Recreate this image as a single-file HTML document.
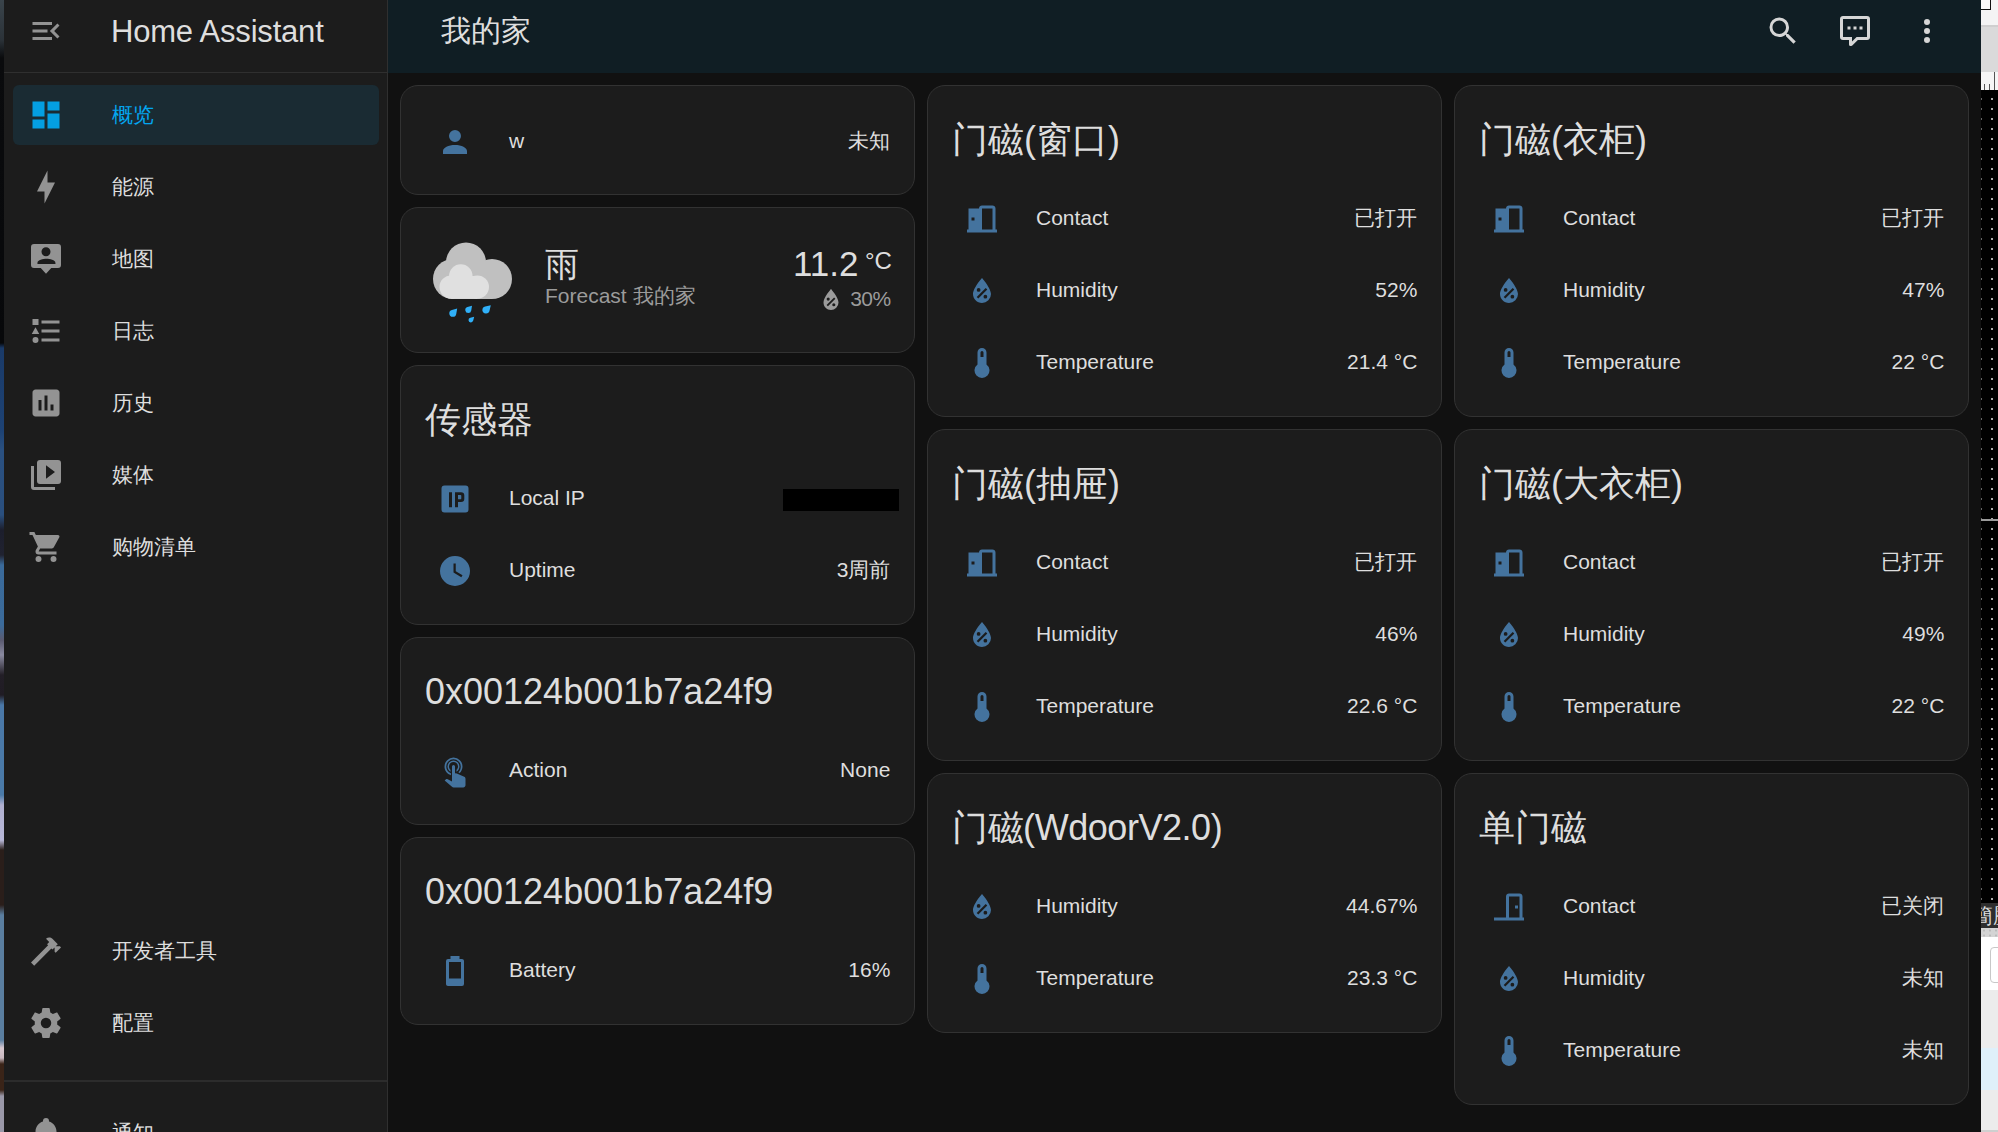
<!DOCTYPE html><html><head><meta charset="utf-8"><style>
html,body{margin:0;padding:0;}
body{width:1998px;height:1132px;overflow:hidden;position:relative;background:#111111;font-family:"Liberation Sans",sans-serif;}
.t{position:absolute;white-space:nowrap;}
.card{position:absolute;box-sizing:border-box;background:#1c1c1c;border:1px solid #323232;border-radius:18px;}
.r{position:absolute;}
</style></head><body>
<div class="r" style="left:0;top:0;width:4px;height:1132px;background:linear-gradient(to bottom,#3a444b 0px,#2b3238 40px,#0a0b0d 58px,#07080a 343px,#1a3a68 348px,#1d4274 430px,#2a5080 450px,#2a4f7e 515px,#1c1e2c 530px,#202230 555px,#3a6a9a 565px,#3b6b9b 625px,#5a5a70 640px,#8a8aa0 655px,#221e26 675px,#201c24 695px,#4a78a8 705px,#4a7aa8 795px,#b0b0d0 805px,#b8b8d8 840px,#2a1e1a 850px,#2a1e1a 905px,#5a7ea0 915px,#5a7ea0 1040px,#d8c8d0 1048px,#c8b8c0 1058px,#3a2418 1064px,#3a2418 1090px,#9a98a8 1096px,#9a98a8 1132px)"></div>
<div class="r" style="left:4px;top:0;width:383px;height:1132px;background:#1c1c1c;border-right:1px solid #2f2f2f"></div>
<div class="r" style="left:4px;top:72px;width:383px;height:1px;background:#2f2f2f"></div>
<div class="r" style="left:4px;top:1080px;width:383px;height:2px;background:#2c2c2c"></div>
<svg style="position:absolute;left:27.5px;top:12.6px;width:36px;height:36px" viewBox="0 0 24 24"><path fill="#939393" fill-rule="evenodd" d="M21,15.61L19.59,17L14.58,12L19.59,7L21,8.39L17.44,12L21,15.61M3,6H16V8H3V6M3,13V11H13V13H3M3,18V16H16V18H3Z"/></svg>
<div class="t " style="left:111px;top:12.70px;font-size:31px;line-height:37.20px;color:#dedede;letter-spacing:-0.2px">Home Assistant</div>
<div class="r" style="left:13px;top:85px;width:366px;height:60px;background:#1a2b33;border-radius:6px"></div>
<svg style="position:absolute;left:27.5px;top:97px;width:36px;height:36px" viewBox="0 0 24 24"><path fill="#049fe2" fill-rule="evenodd" d="M13,3V9H21V3M13,21H21V11H13M3,21H11V15H3M3,13H11V3H3V13Z"/></svg>
<div class="t " style="left:111.5px;top:102.40px;font-size:21px;line-height:25.20px;color:#03a6f0;">概览</div>
<svg style="position:absolute;left:27.5px;top:169px;width:36px;height:36px" viewBox="0 0 24 24"><path fill="#939393" fill-rule="evenodd" d="M11 15H6L13 1V9H18L11 23V15Z"/></svg>
<div class="t " style="left:111.5px;top:174.40px;font-size:21px;line-height:25.20px;color:#dedede;">能源</div>
<svg style="position:absolute;left:27.5px;top:241px;width:36px;height:36px" viewBox="0 0 24 24"><path fill="#939393" fill-rule="evenodd" d="M4,2H20A2,2 0 0,1 22,4V16A2,2 0 0,1 20,18H15.5L12,21.8L8.5,18H4A2,2 0 0,1 2,16V4A2,2 0 0,1 4,2M12,4.2A3,3 0 0,0 9,7.2A3,3 0 0,0 12,10.2A3,3 0 0,0 15,7.2A3,3 0 0,0 12,4.2M6.3,15.3H18.3V14.6C18.3,12.8 14.5,11.9 12.3,11.9C10.1,11.9 6.3,12.8 6.3,14.6V15.3Z"/></svg>
<div class="t " style="left:111.5px;top:246.40px;font-size:21px;line-height:25.20px;color:#dedede;">地图</div>
<svg style="position:absolute;left:27.5px;top:313px;width:36px;height:36px" viewBox="0 0 24 24"><path fill="#939393" fill-rule="evenodd" d="M5,9.5L7.5,14H2.5L5,9.5M3,4H7V8H3V4M5,20A2,2 0 0,0 7,18A2,2 0 0,0 5,16A2,2 0 0,0 3,18A2,2 0 0,0 5,20M9,5V7H21V5H9M9,19H21V17H9V19M9,13H21V11H9V13Z"/></svg>
<div class="t " style="left:111.5px;top:318.40px;font-size:21px;line-height:25.20px;color:#dedede;">日志</div>
<svg style="position:absolute;left:27.5px;top:385px;width:36px;height:36px" viewBox="0 0 24 24"><path fill="#939393" fill-rule="evenodd" d="M19 3H5C3.9 3 3 3.9 3 5V19C3 20.1 3.9 21 5 21H19C20.1 21 21 20.1 21 19V5C21 3.9 20.1 3 19 3M9 17H7V10H9V17M13 17H11V7H13V17M17 17H15V13H17V17Z"/></svg>
<div class="t " style="left:111.5px;top:390.40px;font-size:21px;line-height:25.20px;color:#dedede;">历史</div>
<svg style="position:absolute;left:27.5px;top:457px;width:36px;height:36px" viewBox="0 0 24 24"><path fill="#939393" fill-rule="evenodd" d="M4,6H2V20A2,2 0 0,0 4,22H18V20H4V6M20,2H8A2,2 0 0,0 6,4V16A2,2 0 0,0 8,18H20A2,2 0 0,0 22,16V4A2,2 0 0,0 20,2M12,14.5V5.5L18,10L12,14.5Z"/></svg>
<div class="t " style="left:111.5px;top:462.40px;font-size:21px;line-height:25.20px;color:#dedede;">媒体</div>
<svg style="position:absolute;left:27.5px;top:529px;width:36px;height:36px" viewBox="0 0 24 24"><path fill="#939393" fill-rule="evenodd" d="M17,18C15.89,18 15,18.89 15,20A2,2 0 0,0 17,22A2,2 0 0,0 19,20C19,18.89 18.1,18 17,18M1,2V4H3L6.6,11.59L5.24,14.04C5.09,14.32 5,14.65 5,15A2,2 0 0,0 7,17H19V15H7.42A0.25,0.25 0 0,1 7.17,14.75C7.17,14.7 7.18,14.66 7.2,14.63L8.1,13H15.55C16.3,13 16.96,12.58 17.3,11.97L20.88,5.5C20.95,5.34 21,5.17 21,5A1,1 0 0,0 20,4H5.21L4.27,2M7,18C5.89,18 5,18.89 5,20A2,2 0 0,0 7,22A2,2 0 0,0 9,20C9,18.89 8.1,18 7,18Z"/></svg>
<div class="t " style="left:111.5px;top:534.40px;font-size:21px;line-height:25.20px;color:#dedede;">购物清单</div>
<svg style="position:absolute;left:27.5px;top:933px;width:36px;height:36px" viewBox="0 0 24 24"><path fill="#939393" fill-rule="evenodd" d="M2 19.63L13.43 8.2L12.72 7.5L14.14 6.07L12 3.89C13.2 2.7 15.09 2.7 16.27 3.89L19.87 7.5L18.45 8.91H21.29L22 9.62L18.45 13.21L17.74 12.5V9.62L16.27 11.04L15.56 10.33L4.13 21.76L2 19.63Z"/></svg>
<div class="t " style="left:111.5px;top:938.40px;font-size:21px;line-height:25.20px;color:#dedede;">开发者工具</div>
<svg style="position:absolute;left:27.5px;top:1005px;width:36px;height:36px" viewBox="0 0 24 24"><path fill="#939393" fill-rule="evenodd" d="M12,15.5A3.5,3.5 0 0,1 8.5,12A3.5,3.5 0 0,1 12,8.5A3.5,3.5 0 0,1 15.5,12A3.5,3.5 0 0,1 12,15.5M19.43,12.97C19.47,12.65 19.5,12.33 19.5,12C19.5,11.67 19.47,11.34 19.43,11L21.54,9.37C21.73,9.22 21.78,8.95 21.66,8.73L19.66,5.27C19.54,5.05 19.27,4.96 19.05,5.05L16.56,6.05C16.04,5.66 15.5,5.32 14.87,5.07L14.5,2.42C14.46,2.18 14.25,2 14,2H10C9.75,2 9.54,2.18 9.5,2.42L9.13,5.07C8.5,5.32 7.96,5.66 7.44,6.05L4.95,5.05C4.73,4.96 4.46,5.05 4.34,5.27L2.34,8.73C2.21,8.95 2.27,9.22 2.46,9.37L4.57,11C4.53,11.34 4.5,11.67 4.5,12C4.5,12.33 4.53,12.65 4.57,12.97L2.46,14.63C2.27,14.78 2.21,15.05 2.34,15.27L4.34,18.73C4.46,18.95 4.73,19.03 4.95,18.95L7.44,17.94C7.96,18.34 8.5,18.68 9.13,18.93L9.5,21.58C9.54,21.82 9.75,22 10,22H14C14.25,22 14.46,21.82 14.5,21.58L14.87,18.93C15.5,18.67 16.04,18.34 16.56,17.94L19.05,18.95C19.27,19.03 19.54,18.95 19.66,18.73L21.66,15.27C21.78,15.05 21.73,14.78 21.54,14.63L19.43,12.97Z"/></svg>
<div class="t " style="left:111.5px;top:1010.40px;font-size:21px;line-height:25.20px;color:#dedede;">配置</div>
<svg style="position:absolute;left:27.5px;top:1115px;width:36px;height:36px" viewBox="0 0 24 24"><path fill="#939393" fill-rule="evenodd" d="M21,19V20H3V19L5,17V11C5,7.9 7.03,5.17 10,4.29C10,4.19 10,4.1 10,4A2,2 0 0,1 12,2A2,2 0 0,1 14,4C14,4.1 14,4.19 14,4.29C16.97,5.17 19,7.9 19,11V17L21,19M14,21A2,2 0 0,1 12,23A2,2 0 0,1 10,21"/></svg>
<div class="t " style="left:111.5px;top:1120.40px;font-size:21px;line-height:25.20px;color:#dedede;">通知</div>
<div class="r" style="left:388px;top:0;width:1593px;height:73px;background:#101e24"></div>
<div class="t " style="left:441px;top:13.00px;font-size:30px;line-height:36.00px;color:#dedede;">我的家</div>
<svg style="position:absolute;left:1765px;top:12.7px;width:36px;height:36px" viewBox="0 0 24 24"><path fill="#d6d6d6" fill-rule="evenodd" d="M9.5,3A6.5,6.5 0 0,1 16,9.5C16,11.11 15.41,12.59 14.44,13.73L14.71,14H15.5L20.5,19L19,20.5L14,15.5V14.71L13.73,14.44C12.59,15.41 11.11,16 9.5,16A6.5,6.5 0 0,1 3,9.5A6.5,6.5 0 0,1 9.5,3M9.5,5C7,5 5,7 5,9.5C5,12 7,14 9.5,14C12,14 14,12 14,9.5C14,7 12,5 9.5,5Z"/></svg>
<svg style="position:absolute;left:1837.3px;top:12.7px;width:36px;height:36px" viewBox="0 0 24 24"><path fill="#d6d6d6" fill-rule="evenodd" d="M9,22A1,1 0 0,1 8,21V18H4A2,2 0 0,1 2,16V4C2,2.89 2.9,2 4,2H20A2,2 0 0,1 22,4V16A2,2 0 0,1 20,18H13.9L10.2,21.71C10,21.9 9.75,22 9.5,22V22H9M10,16V19.08L13.08,16H20V4H4V16H10M17,11H15V9H17V11M13,11H11V9H13V11M9,11H7V9H9V11Z"/></svg>
<svg style="position:absolute;left:1909px;top:13px;width:36px;height:36px" viewBox="0 0 24 24"><path fill="#d6d6d6" fill-rule="evenodd" d="M12,16A2,2 0 0,1 14,18A2,2 0 0,1 12,20A2,2 0 0,1 10,18A2,2 0 0,1 12,16M12,10A2,2 0 0,1 14,12A2,2 0 0,1 12,14A2,2 0 0,1 10,12A2,2 0 0,1 12,10M12,4A2,2 0 0,1 14,6A2,2 0 0,1 12,8A2,2 0 0,1 10,6A2,2 0 0,1 12,4Z"/></svg>
<div class="card" style="left:400px;top:85px;width:515px;height:110px"></div>
<svg style="position:absolute;left:437px;top:123.7px;width:36px;height:36px" viewBox="0 0 24 24"><path fill="#44739e" fill-rule="evenodd" d="M12,4A4,4 0 0,1 16,8A4,4 0 0,1 12,12A4,4 0 0,1 8,8A4,4 0 0,1 12,4M12,14C16.42,14 20,15.79 20,18V20H4V18C4,15.79 7.58,14 12,14Z"/></svg>
<div class="t " style="left:509px;top:128.40px;font-size:21px;line-height:25.20px;color:#dedede;">w</div>
<div class="t " style="right:1107.7px;top:128.40px;font-size:21px;line-height:25.20px;color:#dedede;text-align:right;">未知</div>
<div class="card" style="left:400px;top:207px;width:515px;height:146px"></div>
<div class="card" style="left:400px;top:365px;width:515px;height:260px"></div>
<div class="t " style="left:425px;top:398.40px;font-size:36px;line-height:43.20px;color:#dedede;">传感器</div>
<svg style="position:absolute;left:437px;top:480.7px;width:36px;height:36px" viewBox="0 0 24 24"><path fill="#44739e" fill-rule="evenodd" d="M5,3H19A2,2 0 0,1 21,5V19A2,2 0 0,1 19,21H5A2,2 0 0,1 3,19V5A2,2 0 0,1 5,3M8,7.5V17.5H10V7.5H8M12,7.5V17.5H14V14H16A2.2,2.2 0 0,0 18.2,11.8V9.7A2.2,2.2 0 0,0 16,7.5H12M14,9.3H15.6A0.6,0.6 0 0,1 16.2,9.9V11.6A0.6,0.6 0 0,1 15.6,12.2H14V9.3Z"/></svg>
<div class="t " style="left:509px;top:485.40px;font-size:21px;line-height:25.20px;color:#dedede;">Local IP</div>
<div class="t " style="right:1107.7px;top:485.40px;font-size:21px;line-height:25.20px;color:#dedede;text-align:right;"></div>
<div class="r" style="left:783px;top:489px;width:116px;height:22px;background:#000"></div>
<svg style="position:absolute;left:437px;top:552.7px;width:36px;height:36px" viewBox="0 0 24 24"><path fill="#44739e" fill-rule="evenodd" d="M12,2A10,10 0 0,0 2,12A10,10 0 0,0 12,22A10,10 0 0,0 22,12A10,10 0 0,0 12,2M16.2,16.2L11,13V7H12.5V12.2L17,14.9L16.2,16.2Z"/></svg>
<div class="t " style="left:509px;top:557.40px;font-size:21px;line-height:25.20px;color:#dedede;">Uptime</div>
<div class="t " style="right:1107.7px;top:557.40px;font-size:21px;line-height:25.20px;color:#dedede;text-align:right;">3周前</div>
<div class="card" style="left:400px;top:637px;width:515px;height:188px"></div>
<div class="t " style="left:425px;top:670.40px;font-size:36px;line-height:43.20px;color:#dedede;">0x00124b001b7a24f9</div>
<svg style="position:absolute;left:437px;top:752.7px;width:36px;height:36px" viewBox="0 0 24 24"><path fill="#44739e" fill-rule="evenodd" d="M10,9A1,1 0 0,1 11,8A1,1 0 0,1 12,9V13.47L13.21,13.6L18.15,15.79C18.68,16.03 19,16.56 19,17.14V21.5C18.97,22.32 18.32,22.97 17.5,23H11C10.62,23 10.26,22.85 10,22.57L5.1,18.37L5.84,17.6C6.03,17.39 6.3,17.28 6.59,17.28H6.8L10,19V9M11,5A4,4 0 0,1 15,9C15,10.5 14.2,11.77 13,12.46V11.24C13.61,10.69 14,9.89 14,9A3,3 0 0,0 11,6A3,3 0 0,0 8,9C8,9.89 8.39,10.69 9,11.24V12.46C7.8,11.77 7,10.5 7,9A4,4 0 0,1 11,5M11,3A6,6 0 0,1 17,9C17,10.7 16.29,12.23 15.17,13.33L14.22,12.88C15.19,12 15.83,10.76 15.83,9A4.83,4.83 0 0,0 11,4.17A4.83,4.83 0 0,0 6.17,9C6.17,11.05 7.45,12.81 9.25,13.5V14.75C6.82,14 5,11.72 5,9A6,6 0 0,1 11,3Z"/></svg>
<div class="t " style="left:509px;top:757.40px;font-size:21px;line-height:25.20px;color:#dedede;">Action</div>
<div class="t " style="right:1107.7px;top:757.40px;font-size:21px;line-height:25.20px;color:#dedede;text-align:right;">None</div>
<div class="card" style="left:400px;top:837px;width:515px;height:188px"></div>
<div class="t " style="left:425px;top:870.40px;font-size:36px;line-height:43.20px;color:#dedede;">0x00124b001b7a24f9</div>
<svg style="position:absolute;left:437px;top:952.7px;width:36px;height:36px" viewBox="0 0 24 24"><path fill="#44739e" fill-rule="evenodd" d="M16,17H8V6H16M16.67,4H15V2H9V4H7.33A1.33,1.33 0 0,0 6,5.33V20.67C6,21.4 6.6,22 7.33,22H16.67A1.33,1.33 0 0,0 18,20.67V5.33C18,4.6 17.4,4 16.67,4Z"/></svg>
<div class="t " style="left:509px;top:957.40px;font-size:21px;line-height:25.20px;color:#dedede;">Battery</div>
<div class="t " style="right:1107.7px;top:957.40px;font-size:21px;line-height:25.20px;color:#dedede;text-align:right;">16%</div>
<svg style="position:absolute;left:420px;top:230px;width:110px;height:100px" viewBox="420 230 110 100">
<g fill="#c0c0c0"><circle cx="466" cy="262.5" r="20"/><circle cx="453" cy="279" r="20"/><circle cx="492" cy="279" r="20"/><rect x="453" y="262" width="39" height="37"/></g>
<g fill="#e0e0e0"><circle cx="460.8" cy="276" r="11.7"/><circle cx="451.2" cy="287.1" r="11.7"/><circle cx="477.3" cy="287.1" r="11.7"/><rect x="451.2" y="276" width="26" height="22.8"/></g>
<g fill="#30b0f8"><path d="M457.20,308.60L456.24,313.92A3.5,3.5 0 1 1 451.96,309.90Z"/><path d="M472.00,305.80L471.26,310.47A3.0,3.0 0 1 1 467.46,307.12Z"/><path d="M490.80,305.20L489.51,310.81A3.6,3.6 0 1 1 485.19,306.49Z"/><path d="M474.20,316.80L473.22,320.60A2.4,2.4 0 1 1 470.37,317.66Z"/></g></svg>
<div class="t " style="left:545px;top:243.60px;font-size:34px;line-height:40.80px;color:#dedede;">雨</div>
<div class="t " style="left:545px;top:283.40px;font-size:21px;line-height:25.20px;color:#9b9b9b;">Forecast 我的家</div>
<div class="t " style="right:1139.5px;top:243.30px;font-size:35px;line-height:42.00px;color:#dedede;text-align:right;">11.2</div>
<div class="t " style="left:865px;top:246.60px;font-size:24px;line-height:28.80px;color:#dedede;">°C</div>
<svg style="position:absolute;left:816px;top:285px;width:30px;height:30px" viewBox="0 0 24 24"><path fill="#9b9b9b" fill-rule="evenodd" d="M12,3.25C12,3.25 6,10 6,14C6,17.32 8.69,20 12,20A6,6 0 0,0 18,14C18,10 12,3.25 12,3.25M14.47,9.97L15.53,11.03L9.53,17.03L8.47,15.97M9.75,10A1.25,1.25 0 0,1 11,11.25A1.25,1.25 0 0,1 9.75,12.5A1.25,1.25 0 0,1 8.5,11.25A1.25,1.25 0 0,1 9.75,10M14.25,14.5A1.25,1.25 0 0,1 15.5,15.75A1.25,1.25 0 0,1 14.25,17A1.25,1.25 0 0,1 13,15.75A1.25,1.25 0 0,1 14.25,14.5Z"/></svg>
<div class="t " style="right:1107.5px;top:286.40px;font-size:21px;line-height:25.20px;color:#9b9b9b;text-align:right;letter-spacing:-0.6px">30%</div>
<div class="card" style="left:927px;top:85px;width:515px;height:332px"></div>
<div class="t " style="left:952px;top:118.40px;font-size:36px;line-height:43.20px;color:#dedede;">门磁(窗口)</div>
<svg style="position:absolute;left:964px;top:200.7px;width:36px;height:36px" viewBox="0 0 24 24"><path fill="#44739e" fill-rule="evenodd" d="M12,3C10.89,3 10,3.89 10,5H3V19H2V21H22V19H21V5C21,3.89 20.11,3 19,3H12M12,5H19V19H12V5M5,11H7V13H5V11Z"/></svg>
<div class="t " style="left:1036px;top:205.40px;font-size:21px;line-height:25.20px;color:#dedede;">Contact</div>
<div class="t " style="right:580.7px;top:205.40px;font-size:21px;line-height:25.20px;color:#dedede;text-align:right;">已打开</div>
<svg style="position:absolute;left:964px;top:272.7px;width:36px;height:36px" viewBox="0 0 24 24"><path fill="#44739e" fill-rule="evenodd" d="M12,3.25C12,3.25 6,10 6,14C6,17.32 8.69,20 12,20A6,6 0 0,0 18,14C18,10 12,3.25 12,3.25M14.47,9.97L15.53,11.03L9.53,17.03L8.47,15.97M9.75,10A1.25,1.25 0 0,1 11,11.25A1.25,1.25 0 0,1 9.75,12.5A1.25,1.25 0 0,1 8.5,11.25A1.25,1.25 0 0,1 9.75,10M14.25,14.5A1.25,1.25 0 0,1 15.5,15.75A1.25,1.25 0 0,1 14.25,17A1.25,1.25 0 0,1 13,15.75A1.25,1.25 0 0,1 14.25,14.5Z"/></svg>
<div class="t " style="left:1036px;top:277.40px;font-size:21px;line-height:25.20px;color:#dedede;">Humidity</div>
<div class="t " style="right:580.7px;top:277.40px;font-size:21px;line-height:25.20px;color:#dedede;text-align:right;">52%</div>
<svg style="position:absolute;left:964px;top:344.7px;width:36px;height:36px" viewBox="0 0 24 24"><path fill="#44739e" fill-rule="evenodd" d="M15 13V5A3 3 0 0 0 9 5V13A5 5 0 1 0 15 13M12 4A1 1 0 0 1 13 5V8H11V5A1 1 0 0 1 12 4Z"/></svg>
<div class="t " style="left:1036px;top:349.40px;font-size:21px;line-height:25.20px;color:#dedede;">Temperature</div>
<div class="t " style="right:580.7px;top:349.40px;font-size:21px;line-height:25.20px;color:#dedede;text-align:right;">21.4 °C</div>
<div class="card" style="left:927px;top:429px;width:515px;height:332px"></div>
<div class="t " style="left:952px;top:462.40px;font-size:36px;line-height:43.20px;color:#dedede;">门磁(抽屉)</div>
<svg style="position:absolute;left:964px;top:544.7px;width:36px;height:36px" viewBox="0 0 24 24"><path fill="#44739e" fill-rule="evenodd" d="M12,3C10.89,3 10,3.89 10,5H3V19H2V21H22V19H21V5C21,3.89 20.11,3 19,3H12M12,5H19V19H12V5M5,11H7V13H5V11Z"/></svg>
<div class="t " style="left:1036px;top:549.40px;font-size:21px;line-height:25.20px;color:#dedede;">Contact</div>
<div class="t " style="right:580.7px;top:549.40px;font-size:21px;line-height:25.20px;color:#dedede;text-align:right;">已打开</div>
<svg style="position:absolute;left:964px;top:616.7px;width:36px;height:36px" viewBox="0 0 24 24"><path fill="#44739e" fill-rule="evenodd" d="M12,3.25C12,3.25 6,10 6,14C6,17.32 8.69,20 12,20A6,6 0 0,0 18,14C18,10 12,3.25 12,3.25M14.47,9.97L15.53,11.03L9.53,17.03L8.47,15.97M9.75,10A1.25,1.25 0 0,1 11,11.25A1.25,1.25 0 0,1 9.75,12.5A1.25,1.25 0 0,1 8.5,11.25A1.25,1.25 0 0,1 9.75,10M14.25,14.5A1.25,1.25 0 0,1 15.5,15.75A1.25,1.25 0 0,1 14.25,17A1.25,1.25 0 0,1 13,15.75A1.25,1.25 0 0,1 14.25,14.5Z"/></svg>
<div class="t " style="left:1036px;top:621.40px;font-size:21px;line-height:25.20px;color:#dedede;">Humidity</div>
<div class="t " style="right:580.7px;top:621.40px;font-size:21px;line-height:25.20px;color:#dedede;text-align:right;">46%</div>
<svg style="position:absolute;left:964px;top:688.7px;width:36px;height:36px" viewBox="0 0 24 24"><path fill="#44739e" fill-rule="evenodd" d="M15 13V5A3 3 0 0 0 9 5V13A5 5 0 1 0 15 13M12 4A1 1 0 0 1 13 5V8H11V5A1 1 0 0 1 12 4Z"/></svg>
<div class="t " style="left:1036px;top:693.40px;font-size:21px;line-height:25.20px;color:#dedede;">Temperature</div>
<div class="t " style="right:580.7px;top:693.40px;font-size:21px;line-height:25.20px;color:#dedede;text-align:right;">22.6 °C</div>
<div class="card" style="left:927px;top:773px;width:515px;height:260px"></div>
<div class="t " style="left:952px;top:806.40px;font-size:36px;line-height:43.20px;color:#dedede;letter-spacing:-0.45px">门磁(WdoorV2.0)</div>
<svg style="position:absolute;left:964px;top:888.7px;width:36px;height:36px" viewBox="0 0 24 24"><path fill="#44739e" fill-rule="evenodd" d="M12,3.25C12,3.25 6,10 6,14C6,17.32 8.69,20 12,20A6,6 0 0,0 18,14C18,10 12,3.25 12,3.25M14.47,9.97L15.53,11.03L9.53,17.03L8.47,15.97M9.75,10A1.25,1.25 0 0,1 11,11.25A1.25,1.25 0 0,1 9.75,12.5A1.25,1.25 0 0,1 8.5,11.25A1.25,1.25 0 0,1 9.75,10M14.25,14.5A1.25,1.25 0 0,1 15.5,15.75A1.25,1.25 0 0,1 14.25,17A1.25,1.25 0 0,1 13,15.75A1.25,1.25 0 0,1 14.25,14.5Z"/></svg>
<div class="t " style="left:1036px;top:893.40px;font-size:21px;line-height:25.20px;color:#dedede;">Humidity</div>
<div class="t " style="right:580.7px;top:893.40px;font-size:21px;line-height:25.20px;color:#dedede;text-align:right;">44.67%</div>
<svg style="position:absolute;left:964px;top:960.7px;width:36px;height:36px" viewBox="0 0 24 24"><path fill="#44739e" fill-rule="evenodd" d="M15 13V5A3 3 0 0 0 9 5V13A5 5 0 1 0 15 13M12 4A1 1 0 0 1 13 5V8H11V5A1 1 0 0 1 12 4Z"/></svg>
<div class="t " style="left:1036px;top:965.40px;font-size:21px;line-height:25.20px;color:#dedede;">Temperature</div>
<div class="t " style="right:580.7px;top:965.40px;font-size:21px;line-height:25.20px;color:#dedede;text-align:right;">23.3 °C</div>
<div class="card" style="left:1454px;top:85px;width:515px;height:332px"></div>
<div class="t " style="left:1479px;top:118.40px;font-size:36px;line-height:43.20px;color:#dedede;">门磁(衣柜)</div>
<svg style="position:absolute;left:1491px;top:200.7px;width:36px;height:36px" viewBox="0 0 24 24"><path fill="#44739e" fill-rule="evenodd" d="M12,3C10.89,3 10,3.89 10,5H3V19H2V21H22V19H21V5C21,3.89 20.11,3 19,3H12M12,5H19V19H12V5M5,11H7V13H5V11Z"/></svg>
<div class="t " style="left:1563px;top:205.40px;font-size:21px;line-height:25.20px;color:#dedede;">Contact</div>
<div class="t " style="right:53.700000000000045px;top:205.40px;font-size:21px;line-height:25.20px;color:#dedede;text-align:right;">已打开</div>
<svg style="position:absolute;left:1491px;top:272.7px;width:36px;height:36px" viewBox="0 0 24 24"><path fill="#44739e" fill-rule="evenodd" d="M12,3.25C12,3.25 6,10 6,14C6,17.32 8.69,20 12,20A6,6 0 0,0 18,14C18,10 12,3.25 12,3.25M14.47,9.97L15.53,11.03L9.53,17.03L8.47,15.97M9.75,10A1.25,1.25 0 0,1 11,11.25A1.25,1.25 0 0,1 9.75,12.5A1.25,1.25 0 0,1 8.5,11.25A1.25,1.25 0 0,1 9.75,10M14.25,14.5A1.25,1.25 0 0,1 15.5,15.75A1.25,1.25 0 0,1 14.25,17A1.25,1.25 0 0,1 13,15.75A1.25,1.25 0 0,1 14.25,14.5Z"/></svg>
<div class="t " style="left:1563px;top:277.40px;font-size:21px;line-height:25.20px;color:#dedede;">Humidity</div>
<div class="t " style="right:53.700000000000045px;top:277.40px;font-size:21px;line-height:25.20px;color:#dedede;text-align:right;">47%</div>
<svg style="position:absolute;left:1491px;top:344.7px;width:36px;height:36px" viewBox="0 0 24 24"><path fill="#44739e" fill-rule="evenodd" d="M15 13V5A3 3 0 0 0 9 5V13A5 5 0 1 0 15 13M12 4A1 1 0 0 1 13 5V8H11V5A1 1 0 0 1 12 4Z"/></svg>
<div class="t " style="left:1563px;top:349.40px;font-size:21px;line-height:25.20px;color:#dedede;">Temperature</div>
<div class="t " style="right:53.700000000000045px;top:349.40px;font-size:21px;line-height:25.20px;color:#dedede;text-align:right;">22 °C</div>
<div class="card" style="left:1454px;top:429px;width:515px;height:332px"></div>
<div class="t " style="left:1479px;top:462.40px;font-size:36px;line-height:43.20px;color:#dedede;">门磁(大衣柜)</div>
<svg style="position:absolute;left:1491px;top:544.7px;width:36px;height:36px" viewBox="0 0 24 24"><path fill="#44739e" fill-rule="evenodd" d="M12,3C10.89,3 10,3.89 10,5H3V19H2V21H22V19H21V5C21,3.89 20.11,3 19,3H12M12,5H19V19H12V5M5,11H7V13H5V11Z"/></svg>
<div class="t " style="left:1563px;top:549.40px;font-size:21px;line-height:25.20px;color:#dedede;">Contact</div>
<div class="t " style="right:53.700000000000045px;top:549.40px;font-size:21px;line-height:25.20px;color:#dedede;text-align:right;">已打开</div>
<svg style="position:absolute;left:1491px;top:616.7px;width:36px;height:36px" viewBox="0 0 24 24"><path fill="#44739e" fill-rule="evenodd" d="M12,3.25C12,3.25 6,10 6,14C6,17.32 8.69,20 12,20A6,6 0 0,0 18,14C18,10 12,3.25 12,3.25M14.47,9.97L15.53,11.03L9.53,17.03L8.47,15.97M9.75,10A1.25,1.25 0 0,1 11,11.25A1.25,1.25 0 0,1 9.75,12.5A1.25,1.25 0 0,1 8.5,11.25A1.25,1.25 0 0,1 9.75,10M14.25,14.5A1.25,1.25 0 0,1 15.5,15.75A1.25,1.25 0 0,1 14.25,17A1.25,1.25 0 0,1 13,15.75A1.25,1.25 0 0,1 14.25,14.5Z"/></svg>
<div class="t " style="left:1563px;top:621.40px;font-size:21px;line-height:25.20px;color:#dedede;">Humidity</div>
<div class="t " style="right:53.700000000000045px;top:621.40px;font-size:21px;line-height:25.20px;color:#dedede;text-align:right;">49%</div>
<svg style="position:absolute;left:1491px;top:688.7px;width:36px;height:36px" viewBox="0 0 24 24"><path fill="#44739e" fill-rule="evenodd" d="M15 13V5A3 3 0 0 0 9 5V13A5 5 0 1 0 15 13M12 4A1 1 0 0 1 13 5V8H11V5A1 1 0 0 1 12 4Z"/></svg>
<div class="t " style="left:1563px;top:693.40px;font-size:21px;line-height:25.20px;color:#dedede;">Temperature</div>
<div class="t " style="right:53.700000000000045px;top:693.40px;font-size:21px;line-height:25.20px;color:#dedede;text-align:right;">22 °C</div>
<div class="card" style="left:1454px;top:773px;width:515px;height:332px"></div>
<div class="t " style="left:1479px;top:806.40px;font-size:36px;line-height:43.20px;color:#dedede;">单门磁</div>
<svg style="position:absolute;left:1491px;top:888.7px;width:36px;height:36px" viewBox="0 0 24 24"><path fill="#44739e" fill-rule="evenodd" d="M12,3C10.89,3 10,3.89 10,5V19H2V21H22V19H21V5C21,3.89 20.11,3 19,3H12M12,5H19V19H12V5M16,11H18V13H16V11Z"/></svg>
<div class="t " style="left:1563px;top:893.40px;font-size:21px;line-height:25.20px;color:#dedede;">Contact</div>
<div class="t " style="right:53.700000000000045px;top:893.40px;font-size:21px;line-height:25.20px;color:#dedede;text-align:right;">已关闭</div>
<svg style="position:absolute;left:1491px;top:960.7px;width:36px;height:36px" viewBox="0 0 24 24"><path fill="#44739e" fill-rule="evenodd" d="M12,3.25C12,3.25 6,10 6,14C6,17.32 8.69,20 12,20A6,6 0 0,0 18,14C18,10 12,3.25 12,3.25M14.47,9.97L15.53,11.03L9.53,17.03L8.47,15.97M9.75,10A1.25,1.25 0 0,1 11,11.25A1.25,1.25 0 0,1 9.75,12.5A1.25,1.25 0 0,1 8.5,11.25A1.25,1.25 0 0,1 9.75,10M14.25,14.5A1.25,1.25 0 0,1 15.5,15.75A1.25,1.25 0 0,1 14.25,17A1.25,1.25 0 0,1 13,15.75A1.25,1.25 0 0,1 14.25,14.5Z"/></svg>
<div class="t " style="left:1563px;top:965.40px;font-size:21px;line-height:25.20px;color:#dedede;">Humidity</div>
<div class="t " style="right:53.700000000000045px;top:965.40px;font-size:21px;line-height:25.20px;color:#dedede;text-align:right;">未知</div>
<svg style="position:absolute;left:1491px;top:1032.7px;width:36px;height:36px" viewBox="0 0 24 24"><path fill="#44739e" fill-rule="evenodd" d="M15 13V5A3 3 0 0 0 9 5V13A5 5 0 1 0 15 13M12 4A1 1 0 0 1 13 5V8H11V5A1 1 0 0 1 12 4Z"/></svg>
<div class="t " style="left:1563px;top:1037.40px;font-size:21px;line-height:25.20px;color:#dedede;">Temperature</div>
<div class="t " style="right:53.700000000000045px;top:1037.40px;font-size:21px;line-height:25.20px;color:#dedede;text-align:right;">未知</div>
<div class="r" style="left:1981px;top:0px;width:17px;height:25px;background:#f4f4f4;"></div>
<div class="r" style="left:1981px;top:-2px;width:9px;height:10px;background:#fafafa;border:1px solid #111;border-left:none"></div>
<div class="r" style="left:1981px;top:25px;width:17px;height:2px;background:#cfcfcf;"></div>
<div class="r" style="left:1981px;top:27px;width:17px;height:45px;background:#dadada;"></div>
<div class="r" style="left:1981px;top:72px;width:17px;height:18px;background:#f6f6f6;"></div>
<div class="r" style="left:1984px;top:84px;width:1px;height:6px;background:#555"></div><div class="r" style="left:1989px;top:84px;width:1px;height:6px;background:#555"></div><div class="r" style="left:1994px;top:72px;width:1px;height:18px;background:#555"></div>
<div class="r" style="left:1981px;top:90px;width:17px;height:813px;background:#000000;background-image:linear-gradient(to bottom,#666 0,#666 2px,transparent 2px,transparent 10px),linear-gradient(to bottom,#aaa 0,#aaa 2px,transparent 2px,transparent 10px);background-size:1px 10px,2px 10px;background-position:0 8px,10px 8px;background-repeat:repeat-y,repeat-y"></div>
<div class="r" style="left:1981px;top:519px;width:17px;height:2px;background:#9a9a9a;"></div>
<div class="r" style="left:1981px;top:903px;width:17px;height:25px;background:#2e2e2e;"></div>
<div class="r" style="left:1981px;top:903px;width:17px;height:25px;overflow:hidden"><div class="t" style="left:-9px;top:1px;font-size:21px;line-height:24px;color:#ddd">簡歷</div></div>
<div class="r" style="left:1981px;top:928px;width:17px;height:9px;background:#d4d4d4;background-image:radial-gradient(circle,#bbb 1px,transparent 1.2px);background-size:6px 5px"></div>
<div class="r" style="left:1981px;top:937px;width:17px;height:53px;background:#ffffff;"></div>
<div class="r" style="left:1990px;top:947px;width:20px;height:34px;border:1px solid #c8c8c8;border-radius:4px;background:#fff"></div>
<div class="r" style="left:1981px;top:990px;width:17px;height:58px;background:#ececec;"></div>
<div class="r" style="left:1981px;top:1048px;width:17px;height:42px;background:#dff0fa;"></div>
<div class="r" style="left:1981px;top:1090px;width:17px;height:40px;background:#ececec;"></div>
<div class="r" style="left:1981px;top:1130px;width:17px;height:2px;background:#cfcfcf;"></div>
</body></html>
